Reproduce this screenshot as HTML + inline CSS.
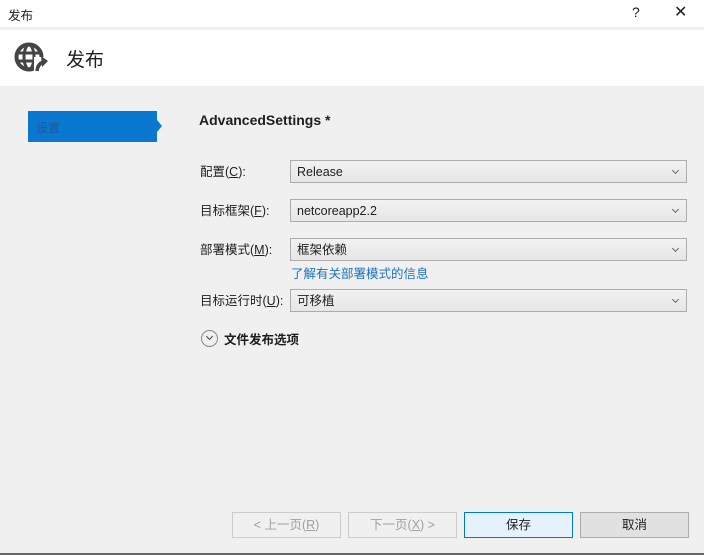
<!DOCTYPE html>
<html><head><meta charset="utf-8"><style>
*{margin:0;padding:0;box-sizing:border-box}
body{width:704px;height:555px;background:#f0f0f0;font-family:"Liberation Sans","Noto Sans CJK SC",sans-serif;font-size:12px;color:#1e1e1e;position:relative;overflow:hidden}
.abs{position:absolute}
.title{left:0;top:0;width:704px;height:27px;background:#fff}
.hdr{left:0;top:30px;width:704px;height:56px;background:#fff}
.dd{position:absolute;left:290px;width:397px;height:23px;border:1px solid #acacac;background:linear-gradient(#f2f2f2,#e6e6e6);padding-left:6px;line-height:23px;font-size:12.5px;color:#1e1e1e}
.dd:after{content:"";position:absolute;right:8px;top:7px;width:4px;height:4px;border-right:1px solid #666;border-bottom:1px solid #666;transform:rotate(45deg)}
.lbl{position:absolute;left:200px;font-size:12.5px}
.btn{position:absolute;top:512px;width:109px;height:26px;border:1px solid #adadad;text-align:center;line-height:24px;font-size:12.5px}
</style></head><body>
<div class="abs title"></div>
<div class="abs" style="left:8px;top:5px;font-size:12.5px">发布</div>
<div class="abs" style="left:632px;top:4px;font-size:14px">?</div>
<div class="abs" style="left:674px;top:2px;font-size:16px">✕</div>
<div class="abs hdr"></div>
<svg class="abs" style="left:14px;top:42px" width="36" height="32" viewBox="0 0 36 32">
<circle cx="15" cy="15" r="12.5" fill="none" stroke="#444" stroke-width="4"/>
<ellipse cx="15" cy="15" rx="5" ry="12" fill="none" stroke="#444" stroke-width="3"/>
<line x1="3" y1="11" x2="27" y2="11" stroke="#444" stroke-width="3"/>
<line x1="3" y1="19" x2="27" y2="19" stroke="#444" stroke-width="3"/>
<rect x="20" y="15" width="16" height="17" fill="#fff"/>
<path d="M23 29 Q24 21 30 20" fill="none" stroke="#444" stroke-width="3.5"/>
<path d="M27 14 L34 19 L28 25 Z" fill="#444"/>
</svg>
<div class="abs" style="left:66px;top:45px;font-size:19px">发布</div>
<div class="abs" style="left:28px;top:111px;width:129px;height:31px;background:#0b78d0"></div>
<div class="abs" style="left:157px;top:120px;width:0;height:0;border-top:6px solid transparent;border-bottom:6px solid transparent;border-left:5px solid #0b78d0"></div>
<div class="abs" style="left:36px;top:119px;font-size:12px;color:#1a5a99">设置</div>
<div class="abs" style="left:199px;top:112px;font-size:14px;font-weight:bold">AdvancedSettings *</div>
<div class="lbl" style="top:161px">配置(<u>C</u>):</div>
<div class="dd" style="top:160px">Release</div>
<div class="lbl" style="top:200px">目标框架(<u>F</u>):</div>
<div class="dd" style="top:199px">netcoreapp2.2</div>
<div class="lbl" style="top:239px">部署模式(<u>M</u>):</div>
<div class="dd" style="top:238px">框架依赖</div>
<div class="abs" style="left:291px;top:263px;font-size:12.5px;color:#1e73c0">了解有关部署模式的信息</div>
<div class="lbl" style="top:290px">目标运行时(<u>U</u>):</div>
<div class="dd" style="top:289px">可移植</div>
<div class="abs" style="left:201px;top:330px;width:17px;height:17px;border:1px solid #888;border-radius:50%"></div>
<div class="abs" style="left:207px;top:334px;width:5px;height:5px;border-right:1px solid #444;border-bottom:1px solid #444;transform:rotate(45deg)"></div>
<div class="abs" style="left:224px;top:329px;font-size:12.5px;font-weight:bold">文件发布选项</div>
<div class="btn" style="left:232px;color:#a0a0a0;border-color:#ccc;background:#f0f0f0">&lt; 上一页(<u>R</u>)</div>
<div class="btn" style="left:348px;color:#a0a0a0;border-color:#ccc;background:#f0f0f0">下一页(<u>X</u>) &gt;</div>
<div class="btn" style="left:464px;border-color:#0078d7;background:#e5f1fb">保存</div>
<div class="btn" style="left:580px;background:#e1e1e1">取消</div>
<div class="abs" style="left:0;top:553px;width:704px;height:2px;background:#666"></div>
</body></html>
